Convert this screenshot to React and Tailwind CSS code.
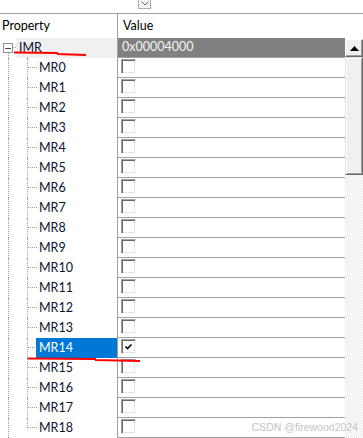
import React from 'react';

const names = Array.from({ length: 19 }, (_, i) => `MR${i}`);

const Dots = ({ className }) => (
  <span className={`absolute border-[#a0a0a0] border-dotted ${className}`} />
);

const CheckBox = ({ checked }) => (
  <div className="ml-[3px] mt-[1px] w-[15px] h-[15px] bg-white border border-t-[#a0a0a0] border-l-[#a0a0a0] border-b-white border-r-white shadow-[inset_1px_1px_0_#696969,inset_-1px_-1px_0_#e3e3e3] flex items-center justify-center">
    {checked && (
      <svg width="9" height="9" viewBox="0 0 9 9">
        <path d="M1.5 4.5 L3.5 6.5 L7.5 2.5" fill="none" stroke="#000" strokeWidth="1.6" />
      </svg>
    )}
  </div>
);

const Row = ({ label, last }) => {
  const selected = label === 'MR14';
  return (
    <div className="flex h-[20px]">
      <div className="w-[117px] relative flex items-center">
        <Dots className="left-[8px] top-0 bottom-0 border-l" />
        <Dots className={`left-[27px] top-0 border-l ${last ? 'h-[10px]' : 'bottom-0'}`} />
        <Dots className="left-[28px] top-[9px] w-[9px] border-t" />
        <span
          className={`ml-[36px] h-full flex-1 flex items-center px-[3px] ${
            selected ? 'bg-[#0078d7] text-white' : 'text-[#10102a]'
          }`}
        >
          {label}
        </span>
      </div>
      <div className="flex-1 border-l border-b border-[#a0a0a0]">
        <CheckBox checked={selected} />
      </div>
    </div>
  );
};

export default function App() {
  return (
    <div className="w-[363px] h-[438px] bg-white overflow-hidden relative font-['Lato',sans-serif] text-[12.5px] leading-none">
      {/* top strip with dropdown button */}
      <div className="h-[14px] border-b border-[#a0a0a0] relative">
        <div className="absolute left-[138px] top-[-2px] w-[13px] h-[11px] border border-[#adadad] bg-[#f5f5f5] flex items-center justify-center">
          <svg width="8" height="5" viewBox="0 0 8 5">
            <path d="M0.5 0.5 L4 4 L7.5 0.5" fill="none" stroke="#606060" strokeWidth="1" />
          </svg>
        </div>
      </div>

      <div className="flex">
        <div className="flex-1 flex flex-col">
          {/* header */}
          <div className="flex h-[24px]">
            <div className="w-[117px] pl-[2px] flex items-center text-black">Property</div>
            <div className="flex-1 border-l border-[#a0a0a0] pl-[5px] flex items-center text-black">Value</div>
          </div>

          {/* IMR root row */}
          <div className="flex h-[20px]">
            <div className="w-[117px] relative flex items-center">
              <div className="absolute left-[3px] top-[5px] w-[10px] h-[10px] border border-[#919191] bg-white flex items-center justify-center">
                <span className="w-[6px] h-[1px] bg-[#4a4a4a]" />
              </div>
              <Dots className="left-[8px] top-[15px] bottom-0 border-l" />
              <Dots className="left-[13px] top-[9px] w-[3px] border-t" />
              <Dots className="left-[27px] top-[19px] bottom-0 border-l" />
              <span className="ml-[16px] h-full flex-1 flex items-center pl-[3px] bg-[#f0f0f0] text-[#10102a]">IMR</span>
            </div>
            <div className="flex-1 border-l border-b border-[#a0a0a0] bg-[#808080] text-[#f4f4f4] pl-[4px] flex items-center">
              0x00004000
            </div>
          </div>

          {names.map((n, i) => (
            <Row key={n} label={n} last={i === names.length - 1} />
          ))}
        </div>

        {/* scrollbar */}
        <div className="w-[18px] flex flex-col">
          <div className="h-[24px] bg-white" />
          <div className="h-[18px] mt-[1px] bg-[#f0f0f0] border border-t-white border-l-white border-b-[#696969] border-r-[#696969] shadow-[inset_-1px_-1px_0_#a0a0a0] flex items-center justify-center">
            <svg width="9" height="5" viewBox="0 0 9 5">
              <path d="M4.5 0 L9 5 L0 5 Z" fill="#000" />
            </svg>
          </div>
          <div className="h-[118px] bg-[#f0f0f0] border border-t-[#e3e3e3] border-l-[#e3e3e3] border-b-[#696969] border-r-[#696969] shadow-[inset_1px_1px_0_#fff,inset_-1px_-1px_0_#a0a0a0]" />
          <div className="flex-1 bg-[repeating-conic-gradient(#ececec_0%_25%,#ffffff_0%_50%)] bg-[length:2px_2px]" />
        </div>
      </div>

      {/* red hand-drawn underlines */}
      <svg className="absolute inset-0 pointer-events-none" width="363" height="438">
        <path d="M14 52.5 L58 53 M57 54 L86 55" stroke="#f00" strokeWidth="2" fill="none" />
        <path d="M28 358.5 L96 359 M95 360 L140 361" stroke="#f00" strokeWidth="2" fill="none" />
      </svg>

      <div className="absolute right-[5px] bottom-[6px] text-[10.5px] text-[#c4c4c4] font-['Liberation_Sans',sans-serif]">
        CSDN @firewood2024
      </div>
    </div>
  );
}
